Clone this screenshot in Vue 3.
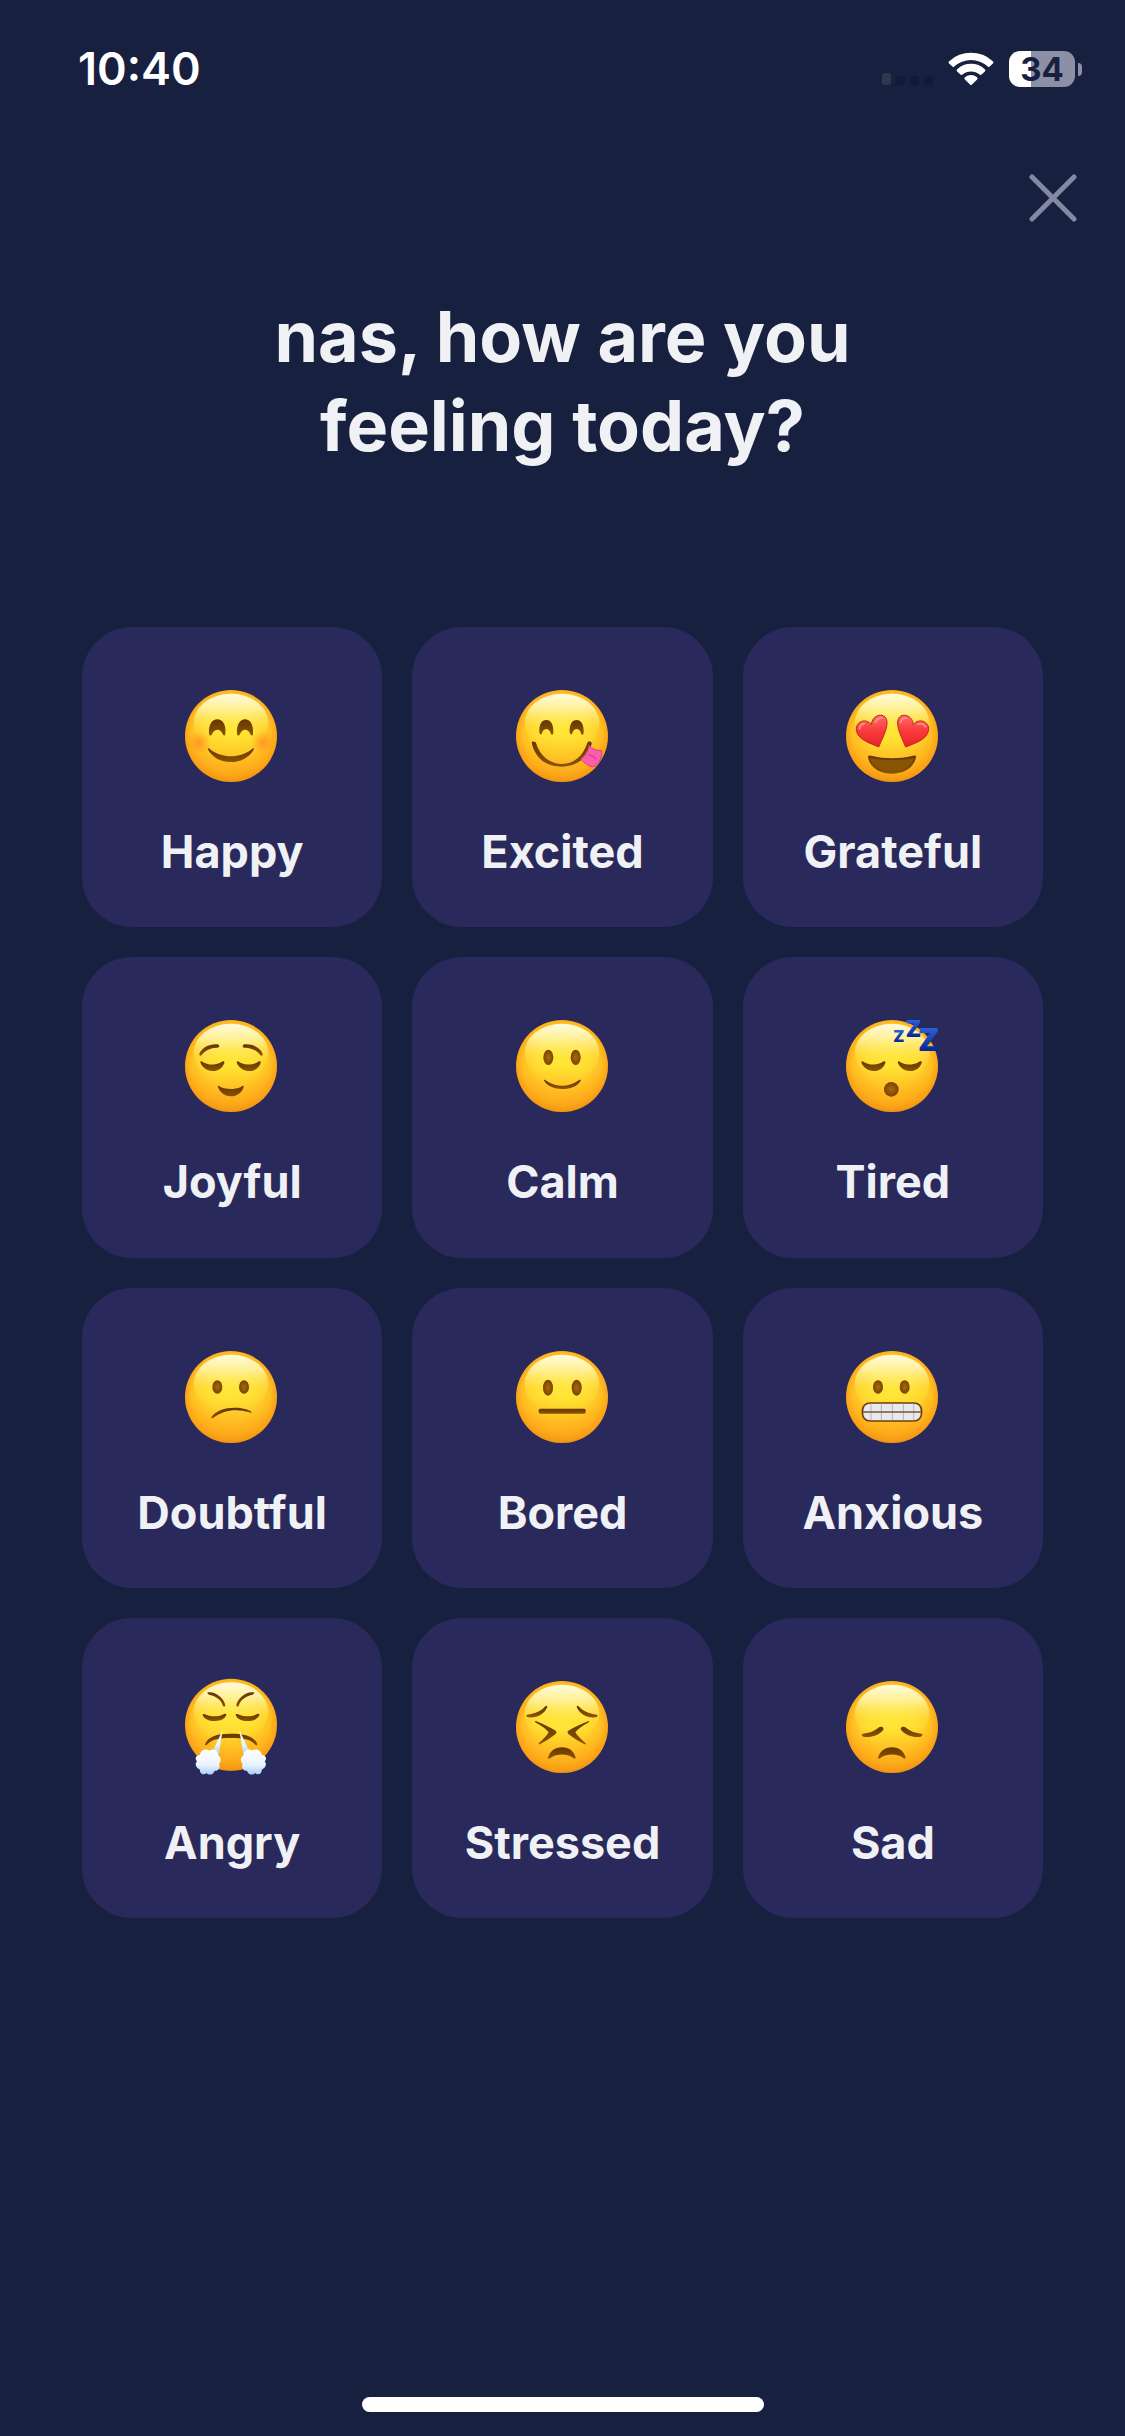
<script setup>
const ovalEyes = (left, right, y, ry) =>
  [left, right].map((x) => ({
    c: 'eye',
    d: `M${x - 15} ${y}a15 ${ry} 0 1 0 30 0a15 ${ry} 0 1 0 -30 0Z`,
  }))

const sleepyEyes = [
  { c: 'fill', d: 'M151 187C153 181 158 188 166 191C180 197 198 195 211 189C218 184 224 182 223 190C217 206 204 215 187 214C170 213 155 203 151 187Z' },
  { c: 'fill', d: 'M260 187C262 181 267 188 275 191C289 197 307 195 320 189C327 184 333 182 332 190C326 206 313 215 296 214C279 213 264 203 260 187Z' },
]

const frown = { c: 'fill', d: 'M201 291C208 268 226 260 243 260C260 260 278 268 284 291C284 295 279 294 276 291C258 278 228 278 209 291C205 294 201 295 201 291Z' }

const moods = [
  {
    name: 'Happy',
    blush: true,
    shapes: [
      { c: 'fill', d: 'M177 192C175 164 187 149 202 149C217 149 229 164 226 192C226 199 220 199 218 194C213 176 192 176 186 194C184 199 178 199 177 192Z' },
      { c: 'fill', d: 'M261 192C259 164 271 149 285 149C300 149 311 164 309 192C309 199 303 199 301 194C296 176 275 176 270 194C268 199 262 199 261 192Z' },
      { c: 'fill', d: 'M173 238C173 234 177 235 180 239C215 267 271 267 305 239C309 235 313 234 311 240C296 265 271 277 242 277C213 277 188 265 173 238Z' },
    ],
  },
  {
    name: 'Excited',
    shapes: [
      { c: 'fill', d: 'M175 188C174 164 182 151 196 151C210 151 218 165 217 189C216 197 210 197 209 190C205 174 187 174 183 190C182 197 176 195 175 188Z' },
      { c: 'fill', d: 'M266 188C265 164 273 151 287 151C301 151 309 165 308 189C307 197 301 197 300 190C296 174 278 174 274 190C273 197 267 195 266 188Z' },
      { c: 'fill', d: 'M152 219C153 214 163 214 165 220C177 260 208 283 241 283C277 283 306 261 319 220C321 213 333 215 332 222C323 266 284 291 241 291C196 291 162 265 152 219Z' },
      { c: 'tongue', d: 'M324 227C331 238 347 243 362 243C363 262 357 284 338 291C324 292 309 279 300 269C312 258 323 243 324 227Z' },
      { c: 'tongue-line', d: 'M322 254Q335 258 346 269' },
    ],
  },
  {
    name: 'Grateful',
    shapes: [
      { c: 'heart', d: 'M203 232C179 221 138 210 136 180C134 155 164 144 181 164C184 132 227 126 228 157C229 181 213 208 203 232Z' },
      { c: 'heart', d: 'M284 232C309 222 350 210 353 180C355 155 324 144 307 164C304 132 261 126 260 157C259 181 274 208 284 232Z' },
      { c: 'shine', d: 'M146 178Q146 164 160 162M193 158Q199 144 213 145' },
      { c: 'shine', d: 'M269 158Q273 144 286 146M321 164Q336 158 344 172' },
      { c: 'fill', d: 'M171 262C172 256 177 257 184 259C222 268 264 268 303 259C310 257 316 256 315 263C309 293 280 312 243 312C206 312 177 294 171 262Z' },
      { c: 'mouth', d: 'M177 265C219 274 267 274 309 265C301 290 276 304 243 304C210 304 184 290 177 265Z' },
    ],
  },
  {
    name: 'Joyful',
    shapes: [
      { c: 'fill', d: 'M148 163C155 143 180 132 202 134C211 136 209 145 201 144C182 144 165 153 156 165C151 170 148 168 148 163Z' },
      { c: 'fill', d: 'M338 163C331 143 306 132 284 134C275 136 277 145 285 144C304 144 321 153 330 165C335 170 338 168 338 163Z' },
      ...sleepyEyes,
      { c: 'fill', d: 'M203 260C203 256 208 260 213 263C232 270 253 270 273 262C279 257 283 257 280 264C274 281 258 291 242 290C225 290 210 280 203 260Z' },
    ],
  },
  {
    name: 'Calm',
    shapes: [
      ...ovalEyes(202, 284, 173, 23),
      { c: 'fill', d: 'M188 242C189 238 193 241 197 244C223 263 264 263 290 244C295 240 301 238 299 243C289 260 268 268 244 268C220 268 199 260 188 242Z' },
    ],
  },
  {
    name: 'Tired',
    sleep: true,
    shapes: [
      ...sleepyEyes,
      { c: 'eye', d: 'M219 269a22 22 0 1 0 44 0a22 22 0 1 0 -44 0Z' },
    ],
  },
  {
    name: 'Doubtful',
    shapes: [
      ...ovalEyes(202, 282, 169, 20),
      { c: 'fill', d: 'M184 260C197 240 224 231 254 231C276 231 296 236 304 243C306 247 302 247 298 245C259 233 222 238 190 261C186 264 183 263 184 260Z' },
    ],
  },
  {
    name: 'Bored',
    shapes: [
      ...ovalEyes(201, 287, 171, 24),
      { c: 'fill', d: 'M178 234H309Q314 234 314 239V244Q314 249 309 249H178Q173 249 173 244V239Q173 234 178 234Z' },
    ],
  },
  {
    name: 'Anxious',
    shapes: [
      ...ovalEyes(201, 281, 169, 20),
      { c: 'teeth', d: 'M179 217H307Q332 217 332 244Q332 271 307 271H179Q154 271 154 244Q154 217 179 217Z' },
      { c: 'gaps', d: 'M180 219V269M211 219V269M244 219V269M277 219V269M308 219V269' },
      { c: 'bite', d: 'M156 244H330' },
    ],
  },
  {
    name: 'Angry',
    raised: true,
    steam: true,
    shapes: [
      { c: 'fill', d: 'M174 95C200 92 224 116 226 134C224 141 219 138 218 133C212 115 195 106 177 102C172 99 171 96 174 95Z' },
      { c: 'fill', d: 'M311 95C285 92 261 116 259 134C261 141 266 138 267 133C273 115 290 106 308 102C313 99 314 96 311 95Z' },
      { c: 'fill', d: 'M158 163C158 158 164 160 169 162C184 168 204 168 218 162C224 158 230 158 229 164C223 176 209 182 193 181C176 181 163 175 158 163Z' },
      { c: 'fill', d: 'M257 163C257 158 263 160 268 162C283 168 303 168 317 162C323 158 329 158 328 164C322 176 308 182 292 181C275 181 262 175 257 163Z' },
      { c: 'fill', d: 'M165 251C173 228 200 219 243 219C286 219 314 228 322 251C322 256 317 254 314 250C300 236 280 232 243 232C207 232 187 236 173 250C170 254 165 256 165 251Z' },
    ],
  },
  {
    name: 'Stressed',
    shapes: [
      { c: 'fill', d: 'M139 162C164 159 180 151 193 137C198 133 200 136 198 141C190 159 168 172 144 170C136 169 134 163 139 162Z' },
      { c: 'fill', d: 'M347 162C322 159 306 151 293 137C288 133 286 136 288 141C296 159 318 172 342 170C350 169 352 163 347 162Z' },
      { c: 'fill', d: 'M164 181C185 190 209 200 224 210Q229 215 223 221C207 234 190 244 176 251C172 252 172 248 175 246C187 235 198 225 203 215C194 203 179 194 165 186C161 183 161 180 164 181Z' },
      { c: 'fill', d: 'M323 181C302 190 277 200 262 210Q257 215 263 221C279 234 296 244 311 251C315 252 315 248 312 246C300 235 288 225 283 215C292 203 307 194 321 186C325 183 326 180 323 181Z' },
      frown,
    ],
  },
  {
    name: 'Sad',
    shapes: [
      { c: 'fill', d: 'M157 219C178 217 192 210 204 200C213 194 221 202 216 209C205 223 183 231 161 229C151 227 151 220 157 219Z' },
      { c: 'fill', d: 'M330 219C309 217 295 210 283 200C274 194 266 202 271 209C282 223 304 231 326 229C336 227 336 220 330 219Z' },
      frown,
    ],
  },
]
</script>

<template>
  <div class="screen">
    <svg class="paints" width="0" height="0" aria-hidden="true">
      <defs>
        <radialGradient id="skin" gradientUnits="userSpaceOnUse" cx="243" cy="190" r="152">
          <stop offset="0" stop-color="#ffe633" />
          <stop offset="0.5" stop-color="#ffd92e" />
          <stop offset="0.78" stop-color="#ffbf22" />
          <stop offset="0.9" stop-color="#fba518" />
          <stop offset="1" stop-color="#e38c10" />
        </radialGradient>
        <linearGradient id="shade" x1="0" y1="0" x2="0" y2="1">
          <stop offset="0.5" stop-color="#ffa016" stop-opacity="0" />
          <stop offset="0.8" stop-color="#ffa016" stop-opacity="0.5" />
          <stop offset="1" stop-color="#f29310" stop-opacity="0.5" />
        </linearGradient>
        <linearGradient id="glow" x1="0" y1="0" x2="0" y2="1">
          <stop offset="0" stop-color="#fffbe0" />
          <stop offset="0.25" stop-color="#fff7ad" stop-opacity="0.85" />
          <stop offset="0.6" stop-color="#ffea45" stop-opacity="0.35" />
          <stop offset="1" stop-color="#ffe733" stop-opacity="0" />
        </linearGradient>
        <radialGradient id="blush">
          <stop offset="0" stop-color="#ff6a1c" stop-opacity="0.5" />
          <stop offset="1" stop-color="#ff7a1c" stop-opacity="0" />
        </radialGradient>
        <linearGradient id="ink" x1="0" y1="0" x2="0" y2="1">
          <stop offset="0" stop-color="#653600" />
          <stop offset="1" stop-color="#8a5403" />
        </linearGradient>
        <radialGradient id="iris">
          <stop offset="0" stop-color="#a76b0b" />
          <stop offset="1" stop-color="#784300" />
        </radialGradient>
        <linearGradient id="red" x1="0" y1="0" x2="0" y2="1">
          <stop offset="0" stop-color="#ff6b66" />
          <stop offset="0.5" stop-color="#f93a3c" />
          <stop offset="1" stop-color="#e4232b" />
        </linearGradient>
        <linearGradient id="cloud" x1="0" y1="0" x2="0" y2="1">
          <stop offset="0" stop-color="#ffffff" />
          <stop offset="0.6" stop-color="#eaf4ff" />
          <stop offset="1" stop-color="#a9cdf8" />
        </linearGradient>
        <linearGradient id="zed" x1="0" y1="0" x2="0" y2="1">
          <stop offset="0.2" stop-color="#2a62d8" />
          <stop offset="0.8" stop-color="#06289a" />
        </linearGradient>
      </defs>
    </svg>

    <header class="status">
      <time class="clock">10:40</time>
      <div class="indicators">
        <span class="signal"><i></i><i></i><i></i><i></i></span>
        <svg class="wifi" viewBox="0 0 46 34" aria-label="Wi-Fi">
          <path d="M1.2 9.2A32 32 0 0 1 44.8 9.2Q46 10.4 44.9 11.5L41.7 14.6Q40.8 15.5 39.7 14.5A25 25 0 0 0 6.3 14.5Q5.2 15.5 4.3 14.6L1.1 11.5Q0 10.4 1.2 9.2Z" />
          <path d="M9.2 17.2A20.5 20.5 0 0 1 36.8 17.2Q38 18.3 36.9 19.4L33.6 22.6Q32.6 23.5 31.5 22.6A13 13 0 0 0 14.5 22.6Q13.4 23.5 12.4 22.6L9.1 19.4Q8 18.3 9.2 17.2Z" />
          <path d="M17 25.2A9.5 9.5 0 0 1 29 25.2Q30.2 26.3 29.1 27.4L24 32.6Q23 33.6 22 32.6L16.9 27.4Q15.8 26.3 17 25.2Z" />
        </svg>
        <div class="battery">
          <span class="level">34</span>
          <span class="tip"></span>
        </div>
      </div>
    </header>

    <nav class="toolbar">
      <button class="close" type="button" aria-label="Close">
        <svg viewBox="0 0 48 48"><path d="M3 3L45 45M45 3L3 45" /></svg>
      </button>
    </nav>

    <main class="content">
      <h1 class="question">nas, how are you<br />feeling today?</h1>

      <div class="moods">
        <button v-for="mood in moods" :key="mood.name" class="mood" type="button">
          <svg class="face" viewBox="102 55 288 288" aria-hidden="true">
            <g :class="{ raised: mood.raised }">
              <circle cx="243" cy="199" r="138" fill="url(#skin)" />
              <circle cx="243" cy="199" r="138" fill="url(#shade)" />
              <ellipse cx="243" cy="160" rx="112" ry="88" fill="url(#glow)" />
            </g>
            <template v-if="mood.blush">
              <circle cx="148" cy="217" r="36" fill="url(#blush)" />
              <circle cx="338" cy="217" r="36" fill="url(#blush)" />
            </template>
            <path v-for="(shape, i) in mood.shapes" :key="i" :class="shape.c" :d="shape.d" />
            <g v-if="mood.steam" class="steam">
              <path d="M218 208L186 276L206 282Z" />
              <path d="M268 208L300 276L280 282Z" />
              <path d="M150 283C150 268 170 262 178 270C190 260 207 272 204 284C215 290 214 304 207 309C213 321 204 332 194 330C190 344 174 344 170 337C160 345 148 338 150 327C137 322 134 309 141 302C132 292 140 282 150 283Z" />
              <path d="M335 283C335 268 315 262 307 270C295 260 278 272 281 284C270 290 271 304 278 309C272 321 281 332 291 330C295 344 311 344 315 337C325 345 337 338 335 327C348 322 351 309 344 302C353 292 345 282 335 283Z" />
            </g>
            <g v-if="mood.sleep" class="snore">
              <text x="247" y="127" font-size="48">Z</text>
              <text x="284" y="111" font-size="67">Z</text>
              <text x="321" y="153" font-size="92">Z</text>
            </g>
          </svg>
          <span class="label">{{ mood.name }}</span>
        </button>
      </div>
    </main>

    <footer class="home"><span class="bar"></span></footer>
  </div>
</template>

<style>
body {
  background: #182040;
}
</style>

<style scoped>
.screen {
  display: flex;
  flex-direction: column;
  min-height: 100vh;
  box-sizing: border-box;
  background: #182040;
  color: #f0f1f4;
  font-family: Inter, "Liberation Sans", sans-serif;
}

.paints {
  position: absolute;
}

.status {
  display: flex;
  align-items: center;
  justify-content: space-between;
  height: 138px;
  padding: 0 43px 0 78px;
  color: #fff;
}

.clock {
  font-size: 45px;
  font-weight: 600;
  line-height: 56px;
}

.indicators {
  display: flex;
  align-items: center;
}

.signal {
  display: flex;
  align-items: flex-end;
  gap: 5px;
  height: 32px;
  margin-right: 15px;
}

.signal i {
  width: 9px;
  height: 9px;
  border-radius: 3px;
  background: #10193c;
}

.signal i:first-child {
  height: 12px;
  background: #2e394f;
}

.wifi {
  width: 46px;
  height: 34px;
  margin-right: 15px;
  fill: #fff;
}

.battery {
  display: flex;
  align-items: center;
  gap: 3px;
}

.level {
  width: 66px;
  height: 36px;
  border-radius: 11px;
  background: linear-gradient(90deg, #fff 34%, #8c90a6 34%);
  color: #182040;
  font-size: 33px;
  font-weight: 700;
  line-height: 36px;
  text-align: center;
}

.tip {
  width: 4px;
  height: 13px;
  border-radius: 0 6px 6px 0;
  background: #8c90a6;
}

.toolbar {
  display: flex;
  justify-content: flex-end;
  padding: 24px 36px;
}

.close {
  display: flex;
  padding: 12px;
  border: 0;
  background: none;
}

.close svg {
  width: 48px;
  height: 48px;
  fill: none;
  stroke: #8289a0;
  stroke-width: 5;
  stroke-linecap: round;
}

.content {
  flex: 1;
}

.question {
  margin: 34px 0 157px;
  font-size: 70px;
  font-weight: 700;
  line-height: 89px;
  text-align: center;
}

.moods {
  display: grid;
  grid-template-columns: repeat(3, 1fr);
  gap: 30px;
  padding: 0 82px;
}

.mood {
  display: flex;
  flex-direction: column;
  align-items: center;
  gap: 40px;
  aspect-ratio: 1;
  padding: 61px 0 0;
  border: 0;
  border-radius: 50px;
  background: #29295b;
  color: inherit;
  font-family: inherit;
}

.face {
  width: 96px;
  height: 96px;
  overflow: visible;
}

.raised {
  transform: translateY(-7px);
}

.fill {
  fill: url(#ink);
}

.eye {
  fill: url(#iris);
}

.mouth {
  fill: #895504;
}

.heart {
  fill: url(#red);
  stroke: #bd2a1c;
  stroke-width: 3;
}

.shine {
  fill: none;
  stroke: #ffb1a8;
  stroke-width: 5;
  stroke-linecap: round;
  opacity: 0.7;
}

.tongue {
  fill: #fa5fae;
  stroke: #e23b83;
  stroke-width: 3;
}

.tongue-line {
  fill: none;
  stroke: #dd3b88;
  stroke-width: 4;
}

.teeth {
  fill: #e8e8ee;
  stroke: #6b3d08;
  stroke-width: 5;
}

.gaps {
  fill: none;
  stroke: #b3b3ba;
  stroke-width: 3;
}

.bite {
  stroke: #76562f;
  stroke-width: 4;
}

.steam path {
  fill: url(#cloud);
}

.snore text {
  fill: url(#zed);
  font-weight: 900;
}

.label {
  font-size: 45px;
  font-weight: 700;
  line-height: 56px;
}

.home {
  display: flex;
  justify-content: center;
  padding: 24px 0;
}

.bar {
  width: 402px;
  height: 15px;
  border-radius: 8px;
  background: #fff;
}
</style>
